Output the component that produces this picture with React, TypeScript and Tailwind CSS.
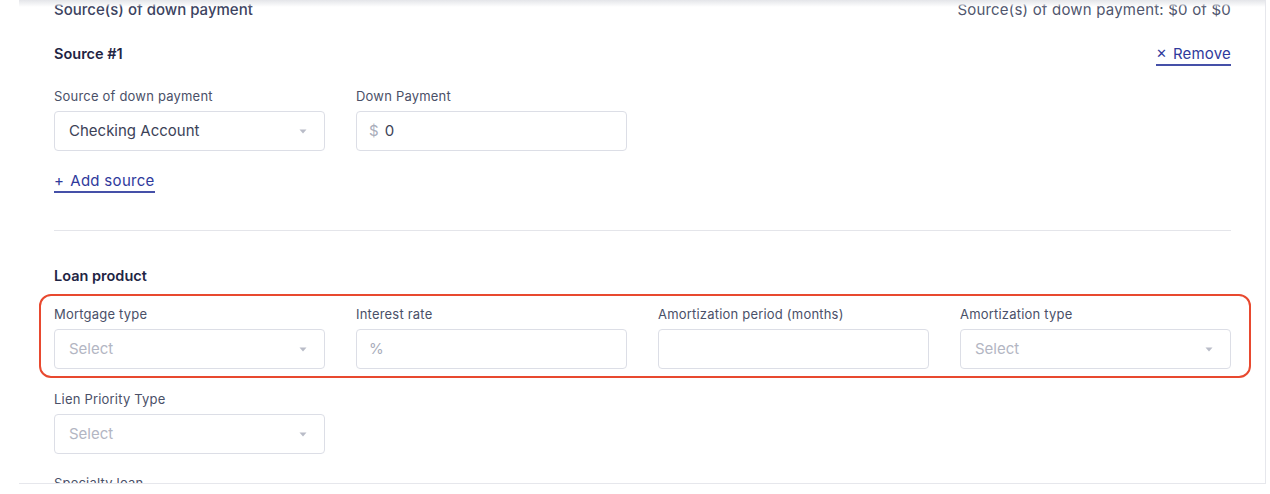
import type { ReactNode } from 'react';

const font = { fontFamily: 'Inter, Roboto, "Noto Sans", sans-serif' };

function Caret() {
  return (
    <svg width="8" height="5" viewBox="0 0 8 5" className="text-[#b9bcc8]">
      <path d="M0.5 0.5h7L4 4.5z" fill="currentColor" />
    </svg>
  );
}

function Label({ children }: { children: ReactNode }) {
  return <div className="h-[18px] text-[13px] leading-[18px] tracking-[0.2px] text-[#4a5068]">{children}</div>;
}

function SelectBox({ value, placeholder }: { value?: string; placeholder?: string }) {
  return (
    <div className="mt-[6px] flex h-[40px] items-center justify-between rounded-[4px] border border-[#dcdee6] bg-white pl-[14px] pr-[17px]">
      <span className={value ? 'text-[15px] text-[#3c4257]' : 'text-[15px] text-[#b3b6c3]'}>{value ?? placeholder}</span>
      <Caret />
    </div>
  );
}

function TextBox({ prefix, value }: { prefix?: string; value?: string }) {
  return (
    <div className="mt-[6px] flex h-[40px] items-center gap-[6px] rounded-[4px] border border-[#dcdee6] bg-white pl-[12px]">
      {prefix && <span className="text-[15px] text-[#a9adbb]">{prefix}</span>}
      {value && <span className="text-[15px] text-[#3c4257]">{value}</span>}
    </div>
  );
}

function Field({ label, children }: { label: string; children: ReactNode }) {
  return (
    <div className="w-[271px]">
      <Label>{label}</Label>
      {children}
    </div>
  );
}

export default function App() {
  return (
    <div className="relative h-[494px] w-[1270px] overflow-hidden bg-white" style={font}>
      <div className="relative ml-[19px] h-[484px] w-[1247px] overflow-hidden border-r border-b border-[#e6e7ec] pl-[35px] pr-[34px]">
        {/* header shadow from the sticky bar above */}
        <div className="pointer-events-none absolute inset-x-0 top-0 h-[7px] bg-gradient-to-b from-[#e4e5e9] via-[#f1f2f4] to-transparent" />

        <div className="flex h-[20px] items-center justify-between leading-[20px]">
          <span className="text-[15px] font-medium text-[#3b4260]">Source(s) of down payment</span>
          <span className="text-[15px] tracking-[0.2px] text-[#4f556d]">Source(s) of down payment: $0 of $0</span>
        </div>

        <div className="mt-[24px] flex h-[22px] items-start justify-between">
          <span className="text-[14.5px] font-semibold leading-[20px] text-[#1f2544]">Source #1</span>
          <button className="flex items-center gap-[6px] border-b-[2px] border-[#4550a8] pb-[1px] text-[15px] leading-[19px] tracking-[0.2px] text-[#2f3a9c]">
            <span className="text-[13px]">✕</span>
            <span>Remove</span>
          </button>
        </div>

        <div className="mt-[21px] flex gap-[31px]">
          <Field label="Source of down payment">
            <SelectBox value="Checking Account" />
          </Field>
          <Field label="Down Payment">
            <TextBox prefix="$" value="0" />
          </Field>
        </div>

        <div className="mt-[20px] flex">
          <button className="flex items-center gap-[6px] border-b-[2px] border-[#4550a8] pb-[1px] text-[15px] leading-[19px] tracking-[0.3px] text-[#2f3a9c]">
            <span>+</span>
            <span>Add source</span>
          </button>
        </div>

        <div className="mt-[37px] h-px bg-[#e4e5ea]" />

        <div className="mt-[35px] h-[20px] text-[14.5px] font-semibold leading-[20px] text-[#1f2544]">Loan product</div>

        <div className="relative mt-[19px] flex gap-[31px]">
          <div className="pointer-events-none absolute -left-[15px] -right-[20px] -top-[11px] -bottom-[9px] rounded-[12px] border-[2px] border-[#e8492f]" />
          <Field label="Mortgage type">
            <SelectBox placeholder="Select" />
          </Field>
          <Field label="Interest rate">
            <TextBox prefix="%" />
          </Field>
          <Field label="Amortization period (months)">
            <TextBox />
          </Field>
          <Field label="Amortization type">
            <SelectBox placeholder="Select" />
          </Field>
        </div>

        <div className="mt-[21px] flex">
          <Field label="Lien Priority Type">
            <SelectBox placeholder="Select" />
          </Field>
        </div>

        <div className="mt-[20px]">
          <Label>Specialty loan</Label>
        </div>
      </div>
    </div>
  );
}
